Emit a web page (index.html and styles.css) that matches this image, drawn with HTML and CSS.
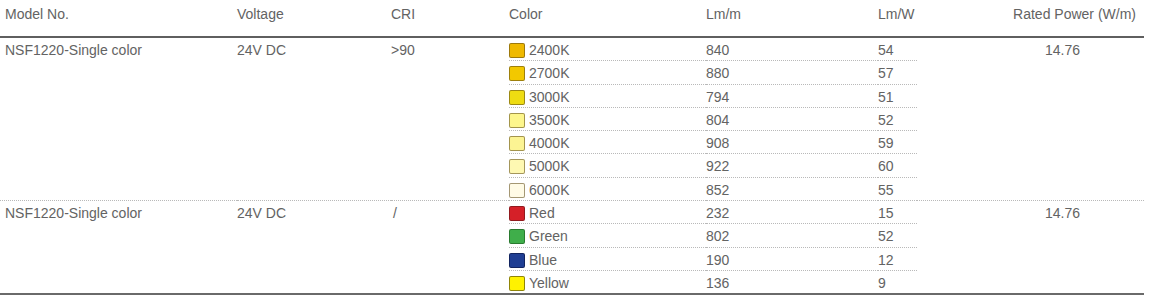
FILE: index.html
```html
<!DOCTYPE html>
<html>
<head>
<meta charset="utf-8">
<link rel="stylesheet" href="styles.css">
</head>
<body>
<table class="spec">
  <colgroup>
    <col class="c-model"><col class="c-volt"><col class="c-cri"><col class="c-color"><col class="c-lmm"><col class="c-lmw"><col class="c-power">
  </colgroup>
  <thead>
    <tr>
      <th class="first">Model No.</th>
      <th>Voltage</th>
      <th>CRI</th>
      <th>Color</th>
      <th>Lm/m</th>
      <th>Lm/W</th>
      <th class="power">Rated Power (W/m)</th>
    </tr>
  </thead>
  <tbody>
    <tr>
      <td class="first span" rowspan="7">NSF1220-Single color</td>
      <td class="span" rowspan="7">24V DC</td>
      <td class="span" rowspan="7">&gt;90</td>
      <td class="cc"><span class="sw s2400"></span>2400K</td>
      <td class="cc">840</td>
      <td class="cc">54</td>
      <td class="span pv" rowspan="7">14.76</td>
    </tr>
    <tr><td class="cc"><span class="sw s2700"></span>2700K</td><td class="cc">880</td><td class="cc">57</td></tr>
    <tr><td class="cc"><span class="sw s3000"></span>3000K</td><td class="cc">794</td><td class="cc">51</td></tr>
    <tr><td class="cc"><span class="sw s3500"></span>3500K</td><td class="cc">804</td><td class="cc">52</td></tr>
    <tr><td class="cc"><span class="sw s4000"></span>4000K</td><td class="cc">908</td><td class="cc">59</td></tr>
    <tr><td class="cc"><span class="sw s5000"></span>5000K</td><td class="cc">922</td><td class="cc">60</td></tr>
    <tr><td class="cc"><span class="sw s6000"></span>6000K</td><td class="cc">852</td><td class="cc">55</td></tr>
    <tr>
      <td class="first span last" rowspan="4">NSF1220-Single color</td>
      <td class="span last" rowspan="4">24V DC</td>
      <td class="span last" rowspan="4"><span class="slash">/</span></td>
      <td class="cc"><span class="sw red"></span>Red</td>
      <td class="cc">232</td>
      <td class="cc">15</td>
      <td class="span pv last" rowspan="4">14.76</td>
    </tr>
    <tr><td class="cc"><span class="sw green"></span>Green</td><td class="cc">802</td><td class="cc">52</td></tr>
    <tr><td class="cc"><span class="sw blue"></span>Blue</td><td class="cc">190</td><td class="cc">12</td></tr>
    <tr><td class="cc last"><span class="sw yellow"></span>Yellow</td><td class="cc last">136</td><td class="cc last">9</td></tr>
  </tbody>
</table>
</body>
</html>
```
FILE: styles.css
```css
html, body {
  margin: 0;
  padding: 0;
  background: #fff;
}

.spec {
  border-collapse: collapse;
  table-layout: fixed;
  width: 1144px;
  font-family: "Liberation Sans", Arial, sans-serif;
  font-size: 14px;
  color: #636363;
}

.c-model { width: 237px; }
.c-volt { width: 154px; }
.c-cri { width: 118px; }
.c-color { width: 197px; }
.c-lmm { width: 172px; }
.c-lmw { width: 39px; }
.c-power { width: 227px; }

.spec th {
  font-weight: normal;
  text-align: left;
  height: 36px;
  padding: 0;
  line-height: 28px;
  vertical-align: top;
  border-bottom: 2px solid #5f5f5f;
  white-space: nowrap;
}

.spec th.first,
.spec td.first {
  padding-left: 5px;
}

.spec th.power {
  text-align: right;
  padding-right: 8px;
}

.spec td {
  padding: 3px 0 0 0;
  height: 19.3px;
  line-height: 19.3px;
  border-bottom: 1px dotted #b9b9b9;
  white-space: nowrap;
}

.spec td.cc {
  vertical-align: top;
}

.spec td.span {
  vertical-align: top;
}

.spec td.pv {
  padding-left: 128px;
}

.spec td.last {
  border-bottom: 2px solid #6a6a6a;
}

.slash {
  padding-left: 2px;
}

.sw {
  display: inline-block;
  box-sizing: border-box;
  width: 16px;
  height: 15px;
  border-radius: 2px;
  border: 1px solid rgba(90, 70, 20, 0.55);
  vertical-align: -3px;
  margin-right: 4px;
}

.s2400 { background: #efb900; }
.s2700 { background: #f2c800; }
.s3000 { background: #eedc12; }
.s3500 { background: #fdf68c; }
.s4000 { background: #fcf493; }
.s5000 { background: #fef8b2; }
.s6000 { background: #fffbe6; }
.red { background: #d52028; border-color: rgba(80, 20, 20, 0.5); }
.green { background: #3fae4a; border-color: rgba(20, 70, 20, 0.5); }
.blue { background: #1f3e93; border-color: rgba(10, 20, 60, 0.6); }
.yellow { background: #fff200; border-color: rgba(70, 60, 10, 0.6); }
```
